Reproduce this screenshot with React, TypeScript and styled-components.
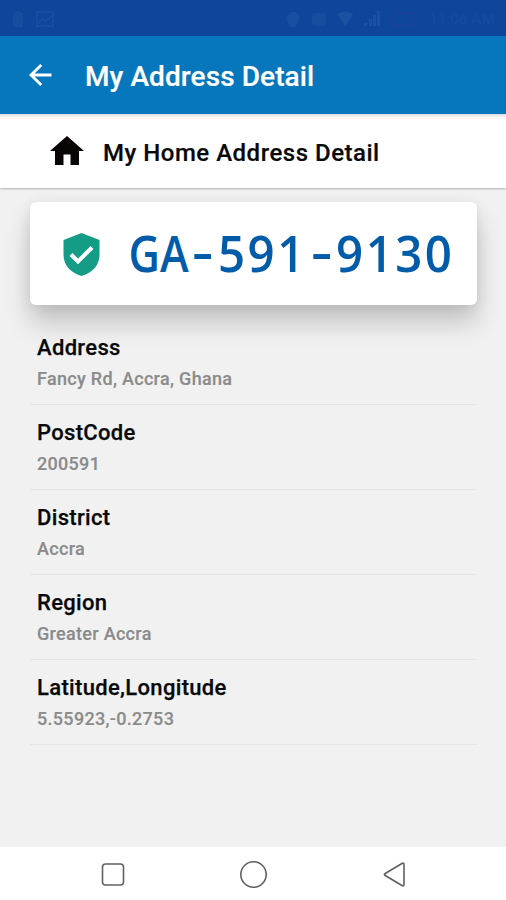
import React from "react";
import styled, { createGlobalStyle } from "styled-components";

const GlobalStyle = createGlobalStyle`
  * { box-sizing: border-box; }
  body { margin: 0; background: #f1f1f1; font-family: Roboto, "Liberation Sans", sans-serif; }
`;

const Screen = styled.div`
  width: 506px;
  height: 900px;
  display: flex;
  flex-direction: column;
  overflow: hidden;
  background: #f1f1f1;
`;

const StatusBar = styled.div`
  height: 36px;
  flex: none;
  display: flex;
  align-items: center;
  justify-content: space-between;
  padding: 1px 11px 0 10px;
  background: #0e469b;
  color: #164d9f;
`;

const StatusGroup = styled.div<{ $gap: number }>`
  display: flex;
  align-items: center;
  gap: ${(p) => p.$gap}px;
`;

const Clock = styled.span`
  margin-left: 2px;
  color: #154c9f;
  font-size: 15.5px;
  line-height: 18px;
  white-space: nowrap;
`;

const AppBar = styled.header`
  height: 78px;
  flex: none;
  display: flex;
  align-items: center;
  padding: 3px 0 0 28px;
  background: #0677bd;
  color: #fff;
`;

const BackIcon = styled.svg`
  width: 24px;
  height: 24px;
  margin-right: 33px;
  margin-top: -3px;
`;

const Title = styled.h1<{ $size: number; $spacing: number }>`
  margin: 0;
  font-size: ${(p) => p.$size}px;
  letter-spacing: ${(p) => p.$spacing}px;
  font-weight: 500;
  line-height: 36px;
  white-space: nowrap;
  -webkit-text-stroke: 0.2px currentColor;
`;

const SectionBar = styled.section`
  height: 74px;
  flex: none;
  display: flex;
  align-items: center;
  padding: 3px 0 0 50px;
  background: linear-gradient(#dedede 0, #fafafa 4px, #fff 7px);
  box-shadow: 0 1px 2px rgba(0, 0, 0, 0.27);
  z-index: 1;
  color: #090909;
`;

const HomeIcon = styled.svg`
  width: 34px;
  height: 29px;
  margin-right: 19px;
  margin-top: -4px;
`;

const Content = styled.main`
  flex: 1;
  padding: 14px 29px 0 30px;
`;

const CodeCard = styled.div`
  height: 103px;
  display: flex;
  align-items: center;
  padding-left: 33px;
  background: #fff;
  border-radius: 6px;
  box-shadow: 0 18px 26px rgba(0, 0, 0, 0.19), 0 2px 14px rgba(0, 0, 0, 0.08);
`;

const ShieldIcon = styled.svg`
  width: 37px;
  height: 43px;
  margin-top: 2px;
`;

const Code = styled.div`
  display: flex;
  margin: -3px 0 0 29px;
  height: 70px;
  font: 600 51px/70px "Open Sans", "Noto Sans", sans-serif;
  color: #005ba8;
`;

const CodePart = styled.span<{ $chars: number; $stretch: number; $spacing: number; $lift: number }>`
  display: flex;
  justify-content: center;
  width: ${(p) => p.$chars * 29.6}px;
  letter-spacing: ${(p) => p.$spacing}px;
  transform: translateY(${(p) => -p.$lift}px) scaleX(${(p) => p.$stretch});
`;

const Details = styled.dl`
  margin: 15px 0 0;
`;

const DetailRow = styled.div`
  height: 85px;
  padding: 13px 7px 0;
  border-bottom: 1px solid #e5e5e5;
`;

const Label = styled.dt`
  font-size: 22px;
  font-weight: 500;
  line-height: 30px;
  letter-spacing: 0.33px;
  color: #090909;
  -webkit-text-stroke: 0.25px currentColor;
`;

const Value = styled.dd`
  margin: 3px 0 0;
  font-size: 18px;
  font-weight: 500;
  line-height: 26px;
  letter-spacing: 0.3px;
  color: #8b8b8b;
  -webkit-text-stroke: 0.15px currentColor;
`;

const NavBar = styled.nav`
  height: 53px;
  flex: none;
  display: flex;
  align-items: center;
  justify-content: space-between;
  padding: 2px 98px 0 100px;
  background: #fff;
`;

const NavIcon = styled.svg`
  width: 28px;
  height: 28px;
  fill: none;
  stroke: #606060;
  stroke-width: 1.6;
  stroke-linejoin: round;
`;

const details = [
  { label: "Address", value: "Fancy Rd, Accra, Ghana" },
  { label: "PostCode", value: "200591" },
  { label: "District", value: "Accra" },
  { label: "Region", value: "Greater Accra" },
  { label: "Latitude,Longitude", value: "5.55923,-0.2753" },
];

export default function App() {
  return (
    <Screen>
      <GlobalStyle />
      <StatusBar>
        <StatusGroup $gap={11}>
          <svg width="15" height="18" viewBox="0 0 15 18" fill="currentColor">
            <path d="M5 1h5v2h3v14H3V3h2z" />
          </svg>
          <svg width="18" height="16" viewBox="0 0 18 16" fill="none" stroke="currentColor" strokeWidth="2">
            <rect x="1" y="1" width="16" height="14" />
            <path d="M2 12l5-4 3 2 6-5" />
          </svg>
        </StatusGroup>
        <StatusGroup $gap={10}>
          <svg width="16" height="18" viewBox="0 0 16 18" fill="#194fa2">
            <path d="M5 2h7l3 5-5 10H5L1 8z" />
          </svg>
          <svg width="16" height="16" viewBox="0 0 16 16" fill="currentColor">
            <rect x="1" y="2" width="14" height="13" rx="3" />
          </svg>
          <svg width="16" height="16" viewBox="0 0 16 16" fill="#1a51a3">
            <path d="M0 3q8-5 16 0L8 15z" />
          </svg>
          <svg width="18" height="17" viewBox="0 0 18 17" fill="#1a51a3">
            <path d="M1 13h3v3H1zM6 9h3v7H6zM10 5h3v11h-3zM14 1h3v15h-3z" />
          </svg>
          <svg width="26" height="14" viewBox="0 0 26 14" fill="none" stroke="#18439a" strokeWidth="2">
            <rect x="1" y="1" width="22" height="12" />
          </svg>
          <Clock>11:06 AM</Clock>
        </StatusGroup>
      </StatusBar>
      <AppBar>
        <BackIcon viewBox="0 0 24 24" fill="none" stroke="currentColor" strokeWidth="2.8">
          <path d="M23.5 12H3M13.2 2L3 12l10.2 10" />
        </BackIcon>
        <Title $size={28} $spacing={0.09}>My Address Detail</Title>
      </AppBar>
      <SectionBar>
        <HomeIcon viewBox="0 0 34 29" fill="#090505">
          <path d="M17 0L33.500 14.500V15H29V29H20.500V18.500H13.500V29H5V15H.5V14.500z" />
        </HomeIcon>
        <Title $size={24} $spacing={0.51}>My Home Address Detail</Title>
      </SectionBar>
      <Content>
        <CodeCard>
          <ShieldIcon viewBox="0 0 37 43">
            <path d="M18.500 0L36.500 7v14.500c0 10-6 18-18 21.500C6.500 39.500.5 31.500.5 21.500V7z" fill="#159c87" />
            <path d="M8 21.500l7 7L29 14.500" fill="none" stroke="#fff" strokeWidth="4" />
          </ShieldIcon>
          <Code>
            <CodePart $chars={2} $stretch={0.85} $spacing={0} $lift={0}>GA</CodePart>
            <CodePart $chars={1} $stretch={1.3} $spacing={0} $lift={2}>-</CodePart>
            <CodePart $chars={3} $stretch={0.93} $spacing={2.6} $lift={0}>591</CodePart>
            <CodePart $chars={1} $stretch={1.3} $spacing={0} $lift={2}>-</CodePart>
            <CodePart $chars={4} $stretch={0.93} $spacing={2.6} $lift={0}>9130</CodePart>
          </Code>
        </CodeCard>
        <Details>
          {details.map((d) => (
            <DetailRow key={d.label}>
              <Label>{d.label}</Label>
              <Value>{d.value}</Value>
            </DetailRow>
          ))}
        </Details>
      </Content>
      <NavBar>
        <NavIcon viewBox="0 0 28 28">
          <rect x="2.5" y="3" width="21" height="21" rx="3" />
        </NavIcon>
        <NavIcon viewBox="0 0 28 28">
          <circle cx="13.5" cy="13.5" r="12.7" />
        </NavIcon>
        <NavIcon viewBox="0 0 28 28">
          <path d="M5.2 12.5L22 2.500q2-1 2 1v20q0 2-2 1L5.200 14.500q-1.600-1 0-2z" />
        </NavIcon>
      </NavBar>
    </Screen>
  );
}
